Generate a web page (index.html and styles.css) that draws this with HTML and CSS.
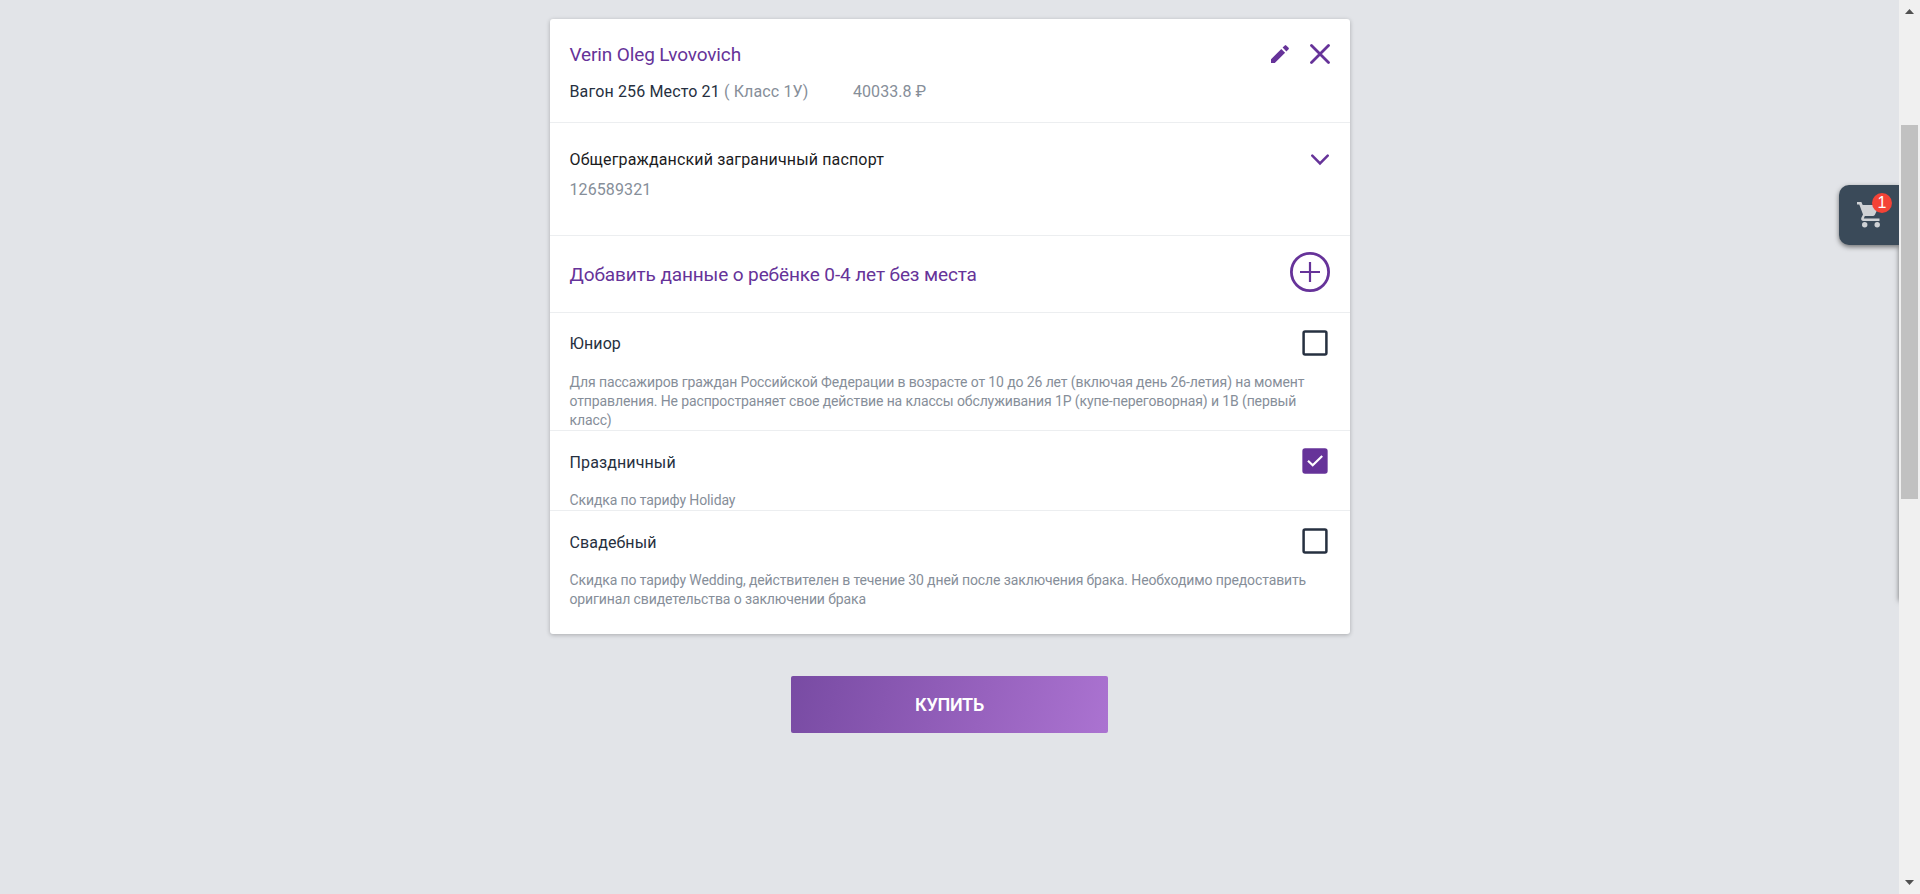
FILE: index.html
```html
<!DOCTYPE html>
<html lang="ru">
<head>
<meta charset="utf-8">
<title>Покупка билета</title>
<link rel="stylesheet" href="styles.css">
</head>
<body>
<div class="layout">
  <main class="page">
    <section class="card">
      <div class="row passenger">
        <div class="grow">
          <div class="title">Verin Oleg Lvovovich</div>
          <div class="seat"><span class="place">Вагон 256 Место 21 <span class="muted">( Класс 1У)</span></span><span class="muted price">40033.8 ₽</span></div>
        </div>
        <div class="actions">
          <svg class="edit" width="20" height="20" viewBox="0 0 20 20"><path d="M1 15.200V19h3.800L15.100 8.700l-3.800-3.800zM18.600 5.200a1 1 0 0 0 0-1.400l-2.400-2.400a1 1 0 0 0-1.400 0l-2.200 2.200 3.800 3.800z"/></svg>
          <svg class="close" width="20" height="20" viewBox="0 0 20 20"><path d="M1.500 1.500l17 17M18.500 1.500l-17 17"/></svg>
        </div>
      </div>
      <div class="row document">
        <div class="grow">
          <div class="doc-type">Общегражданский заграничный паспорт</div>
          <div class="muted doc-number">126589321</div>
        </div>
        <svg class="chevron" width="18" height="12" viewBox="0 0 18 12"><path d="M1.300 1.700L9 9.400l7.700-7.700"/></svg>
      </div>
      <div class="row child">
        <div class="title grow">Добавить данные о ребёнке 0-4 лет без места</div>
        <svg class="plus" width="40" height="40" viewBox="0 0 40 40"><circle cx="20" cy="20" r="18.600"/><path d="M10 20h20M20 10v20"/></svg>
      </div>
      <div class="row tariff junior">
        <div class="tariff-head"><span>Юниор</span><svg class="box" width="26" height="26" viewBox="0 0 26 26"><rect x="1.600" y="1.600" width="22.800" height="22.800" rx="1.500"/></svg></div>
        <p class="note">Для пассажиров граждан Российской Федерации в возрасте от 10 до 26 лет (включая день 26-летия) на момент отправления. Не распространяет свое действие на классы обслуживания 1Р (купе-переговорная) и 1В (первый класс)</p>
      </div>
      <div class="row tariff holiday">
        <div class="tariff-head"><span>Праздничный</span><svg class="box checked" width="26" height="26" viewBox="0 0 26 26"><rect x="1.600" y="1.600" width="22.800" height="22.800" rx="1.500"/><path d="M6 12.800l4.700 4.500L20.200 8"/></svg></div>
        <p class="note">Скидка по тарифу Holiday</p>
      </div>
      <div class="row tariff wedding">
        <div class="tariff-head"><span>Свадебный</span><svg class="box" width="26" height="26" viewBox="0 0 26 26"><rect x="1.600" y="1.600" width="22.800" height="22.800" rx="1.500"/></svg></div>
        <p class="note">Скидка по тарифу Wedding, действителен в течение 30 дней после заключения брака. Необходимо предоставить оригинал свидетельства о заключении брака</p>
      </div>
    </section>
    <button class="buy">КУПИТЬ</button>
    <div class="drawer-shadow"></div>
    <div class="cart">
      <svg class="cart-icon" width="24" height="26" viewBox="0 0 24 26"><path d="M0 0h4.400l1.300 3H22.500l-4.600 9.700a2.500 2.500 0 0 1-2.100 1.300H7.800L6.800 16.500H22.500V19H6.500c-2 0-2.900-2-2-3.600L6 12.600 2.300 2.400H0z"/><circle cx="7.700" cy="22.800" r="2.700"/><circle cx="20.200" cy="22.800" r="2.700"/></svg>
      <span class="badge">1</span>
    </div>
  </main>
  <div class="scrollbar">
    <svg width="9" height="5" viewBox="0 0 9 5"><path d="M0 5l4.500-5L9 5z"/></svg>
    <div class="thumb"></div>
    <svg width="9" height="5" viewBox="0 0 9 5"><path d="M0 0l4.500 5L9 0z"/></svg>
  </div>
</div>
</body>
</html>
```
FILE: styles.css
```css
* { box-sizing: border-box; }
body {
  margin: 0;
  font: 16px/24px Roboto, "Open Sans", sans-serif;
  color: #263040;
  background: #e2e4e8;
  overflow: hidden;
}
.layout { display: flex; height: 894px; }
.page {
  flex: 1;
  position: relative;
  display: flex;
  flex-direction: column;
  align-items: center;
  padding: 19px 0 0 1px;
  overflow: hidden;
}
.card {
  width: 800px;
  background: #fff;
  border-radius: 3px;
  box-shadow: 0 1px 4px rgba(0, 0, 0, .25);
}
.row { padding: 0 20px 0 19.500px; border-bottom: 1px solid #eceef0; }
.row:last-child { border-bottom: 0; }
.grow { flex: 1; }
.title { font-size: 19px; letter-spacing: -.12px; color: #663399; }
.muted { color: #868e99; }

.passenger { display: flex; height: 104px; padding-top: 24px; }
.seat { display: flex; gap: 44.500px; margin-top: 13px; }
.place { letter-spacing: .14px; }
.price { letter-spacing: .06px; }
.actions { display: flex; gap: 20px; }
.edit { fill: #663399; margin-top: 1px; }
.close { margin-top: 1px; }
.close path, .chevron path { stroke: #663399; stroke-width: 2.500; fill: none; stroke-linecap: round; }
.close path { stroke-width: 2.800; }

.document { display: flex; height: 113px; padding-top: 25px; }
.doc-type { color: #1c1c1e; letter-spacing: .15px; }
.doc-number { margin-top: 6px; letter-spacing: .1px; }
.chevron { margin: 6px 1px 0 0; }

.child { display: flex; height: 77px; padding-top: 16px; }
.child .title { margin-top: 11px; }
.plus circle { fill: none; stroke: #663399; stroke-width: 2.800; }
.plus path { stroke: #663399; stroke-width: 2.200; }

.tariff { padding-top: 17px; }
.tariff-head { display: flex; justify-content: space-between; align-items: flex-start; height: 26px; padding-right: 2px; }
.tariff-head > span { margin-top: 3px; letter-spacing: .12px; }
.junior .tariff-head > span { margin-top: 2px; }
.note { margin: 17px 0 0; font-size: 14px; line-height: 19px; letter-spacing: -.115px; color: #868e99; }
.junior { height: 118px; }
.junior .note { padding-right: 20px; }
.holiday { height: 80px; }
.wedding { height: 123px; }
.box rect { fill: none; stroke: #263040; stroke-width: 2.500; }
.checked rect { fill: #663399; stroke: #663399; }
.checked path { fill: none; stroke: #fff; stroke-width: 2.200; }

.buy {
  flex: none;
  width: 317px;
  height: 57px;
  margin: 42px 1px 0 0;
  padding: 0;
  border: 0;
  border-radius: 2px;
  background: linear-gradient(105deg, #784ba3, #9762be 60%, #ab73d1);
  color: #fff;
  font: 600 18px/24px Roboto, "Open Sans", sans-serif;
  letter-spacing: -.3px;
}

.drawer-shadow {
  position: absolute;
  left: 100%;
  top: 200px;
  width: 20px;
  height: 401px;
  box-shadow: 0 0 5px rgba(0, 0, 0, .5);
}
.cart {
  position: absolute;
  right: 0;
  top: 185px;
  width: 60px;
  height: 60px;
  padding: 17px;
  border-radius: 10px 0 0 10px;
  background: #3a4a59;
  box-shadow: 0 2px 5px rgba(0, 0, 0, .5);
}
.cart-icon { display: block; fill: #cfd2d5; }
.badge {
  position: absolute;
  left: 33px;
  top: 8px;
  width: 20px;
  height: 20px;
  border-radius: 50%;
  background: #f44336;
  color: #fff;
  font: 16px/20px "Liberation Sans", sans-serif;
  text-align: center;
}
.scrollbar {
  display: flex;
  flex-direction: column;
  align-items: center;
  width: 21px;
  padding: 9px 0;
  background: #f0f0f0;
}
.scrollbar svg { fill: #505050; }
.thumb { width: 17px; height: 374px; margin: 111px 0 auto; background: #c1c1c1; }
.cart-icon { margin-left: 1px; }
```
